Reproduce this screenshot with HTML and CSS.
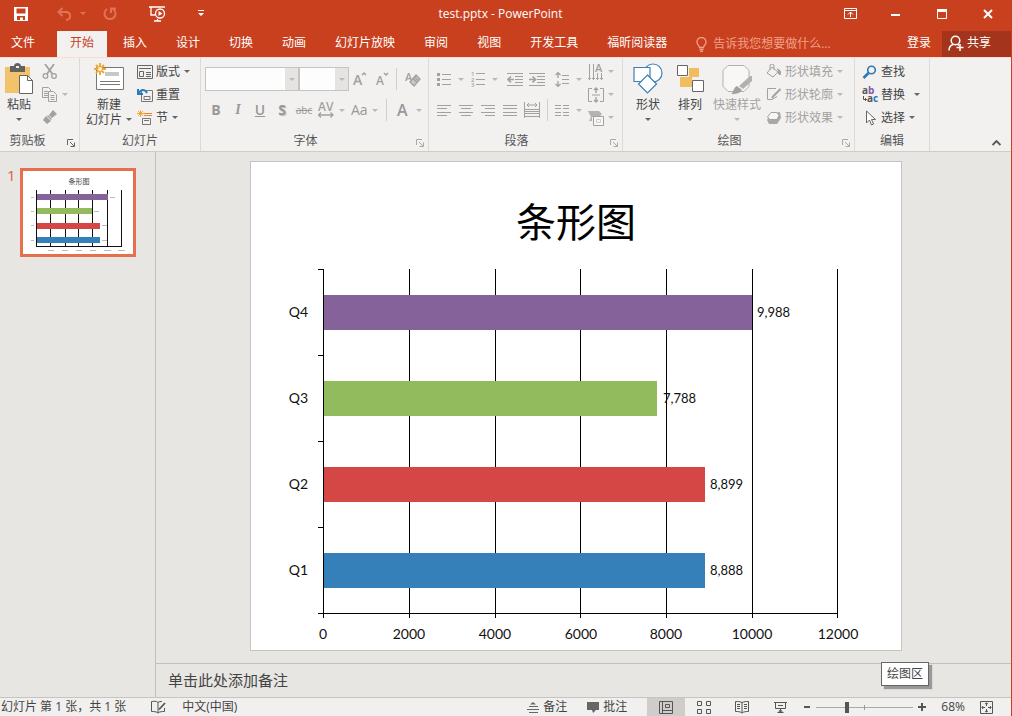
FILE: index.html
```html
<!DOCTYPE html>
<html lang="zh-CN">
<head>
<meta charset="utf-8">
<title>test.pptx - PowerPoint</title>
<link rel="stylesheet" href="styles.css">
</head>
<body>
<div class="app">
  <header class="header">
    <div class="titlebar">
      <div class="quick">
        <button class="quick-btn" aria-label="保存"><svg width="14" height="14" viewBox="0 0 14 14"><path d="M0 0h14v14H0z" fill="#fff"/><path d="M2.500 1.500h9v5h-9zM3 9h8v4H9v-2.500H6V13H3z" fill="#c9401f"/></svg></button>
        <button class="quick-btn wide dim" aria-label="撤消"><svg width="15" height="14" viewBox="0 0 15 14" fill="none" stroke="currentColor" stroke-width="2"><path d="M5.500 1 1.500 5l4 4M2 5h7c5 0 6 7 0 8"/></svg><span class="caret"></span></button>
        <button class="quick-btn dim" aria-label="恢复"><svg width="14" height="14" viewBox="0 0 14 14" fill="none" stroke="currentColor" stroke-width="2"><path d="M4 2a5.500 5.500 0 1 0 6 0M8 6V1.500h5"/></svg></button>
        <button class="quick-btn" aria-label="从头开始放映"><svg width="17" height="16" viewBox="0 0 17 16" fill="none" stroke="#fff" stroke-width="1.300"><path d="M0 1h16M2 1v8h4M5 15h7M8.500 13v2"/><circle cx="11" cy="7.500" r="4.500" fill="#c9401f"/><path d="m9.500 5 4 2.500-4 2.500z" fill="#fff" stroke="none"/></svg></button>
        <button class="quick-btn" aria-label="自定义快速访问工具栏"><svg width="6" height="7" viewBox="0 0 6 7" fill="#fff"><path d="M0 0h6v1H0zM0 3h6L3 6z"/></svg></button>
      </div>
      <h1 class="title">test.pptx - PowerPoint</h1>
      <div class="window-controls">
        <button aria-label="功能区显示选项"><svg width="13" height="11" viewBox="0 0 13 11" fill="none" stroke="#fff"><path d="M.5.5h12v10H.5zM.5 2.500h12M6.500 9V4M4 6.500 6.500 4 9 6.500"/></svg></button>
        <button aria-label="最小化"><svg width="10" height="10" viewBox="0 0 10 10"><path d="M0 5h9v2H0z" fill="#fff"/></svg></button>
        <button aria-label="最大化"><svg width="10" height="10" viewBox="0 0 10 10" fill="none" stroke="#fff"><path d="M.5.5h9v9h-9z"/><path d="M0 1.500h10" stroke-width="3"/></svg></button>
        <button aria-label="关闭"><svg width="10" height="10" viewBox="0 0 10 10" stroke="#fff" stroke-width="2"><path d="m1 1 8 8M9 1 1 9"/></svg></button>
      </div>
    </div>
    <nav class="tabs">
      <button class="tab file">文件</button>
      <button class="tab active">开始</button>
      <button class="tab">插入</button>
      <button class="tab">设计</button>
      <button class="tab">切换</button>
      <button class="tab">动画</button>
      <button class="tab">幻灯片放映</button>
      <button class="tab">审阅</button>
      <button class="tab">视图</button>
      <button class="tab">开发工具</button>
      <button class="tab">福昕阅读器</button>
      <button class="tell-me"><svg width="11" height="15" viewBox="0 0 11 15" fill="none" stroke="currentColor" stroke-width="1.300"><path d="M3.500 10.500c0-2-2.500-2.500-2.500-5.500a4.500 4.500 0 0 1 9 0c0 3-2.500 3.500-2.500 5.500zM3.500 12.500h4M4 14.300h3"/></svg>告诉我您想要做什么...</button>
      <button class="login">登录</button>
      <button class="share"><svg width="16" height="16" viewBox="0 0 16 16" fill="none" stroke="#fff" stroke-width="1.500"><circle cx="7.500" cy="5.500" r="4.300"/><path d="M1 15.500c0-4 2-5.500 4.500-6M12 9v7M8.500 12.500h7M9.500 9.500l1.500 1"/></svg>共享</button>
    </nav>
  </header>

  <section class="ribbon" aria-label="开始">
    <div class="group clipboard">
      <div class="group-body">
        <button class="big paste"><svg width="30" height="32" viewBox="0 0 30 32"><path d="M1 4h25v26H1z" fill="#f3c36c"/><path d="M6 3h4c0-4 7-4 7 0h4v6H6z" fill="#626262"/><path d="M12 3h3v2h-3z" fill="#f1f0ef"/><path d="M15.500 12.500h8l5 5v13h-13z" fill="#fff" stroke="#666"/><path d="M23.500 12.500v5h5" fill="none" stroke="#666"/></svg><span>粘贴</span><span class="caret"></span></button>
        <div class="stack disabled">
          <button class="row" aria-label="剪切"><svg width="16" height="15" viewBox="0 0 16 15" fill="none" stroke="currentColor" stroke-width="1.300"><path d="m3 0 7.500 10M12 0 5 10" stroke-width="1.800"/><circle cx="3.500" cy="12" r="2.300"/><circle cx="12" cy="12" r="2.300"/></svg></button>
          <button class="row" aria-label="复制"><svg width="16" height="15" viewBox="0 0 16 15" fill="#f1f0ef" stroke="currentColor"><path d="M.5.5h6l2 2v8h-8zM2 4.500h4M2 6.500h4M2 8.500h4"/><path d="M6.500 4.500h5l3 3v7h-8zM8.500 8.500h4M8.500 10.500h4M8.500 12.500h4"/></svg><span class="caret"></span></button>
          <button class="row" aria-label="格式刷"><svg width="16" height="15" viewBox="0 0 16 15" fill="currentColor"><path d="m11 0 4 4-5 4-3-3zM6 5l4 4-1 1-4-4zM4 6l5 5-4 3-4-4z"/></svg></button>
        </div>
      </div>
      <div class="caption">剪贴板</div>
      <button class="launcher dark" aria-label="剪贴板设置"><svg width="8" height="8" viewBox="0 0 8 8" fill="none" stroke="currentColor"><path d="M.5 6V.5H6M3 3l4 4M7.500 3.500v4h-4"/></svg></button>
    </div>

    <div class="group slides">
      <div class="group-body">
        <button class="big new-slide"><svg width="30" height="28" viewBox="0 0 30 28"><path d="M2.500 4.500h27v22h-27z" fill="#fff" stroke="#777"/><path d="M11 9h14v4H11z" fill="#c8c8c8"/><path d="M6 18.500h20M6 21.500h20" stroke="#777"/><path d="M6 0v12M0 6h12M2 2l8 8M10 2l-8 8" stroke="#efa93b" stroke-width="2"/><circle cx="6" cy="6" r="2" fill="#fff5d5"/></svg><span>新建</span><span class="with-caret">幻灯片<span class="caret"></span></span></button>
        <div class="stack">
          <button class="row"><svg width="16" height="14" viewBox="0 0 16 14" fill="none" stroke="#666"><path d="M.5.500h15v13H.5zM2 3.500h12M2.500 6.500h4v5h-4zM9 7.500h5M9 9.500h5M9 11.500h5"/></svg><span>版式</span><span class="caret"></span></button>
          <button class="row"><svg width="16" height="14" viewBox="0 0 16 14" fill="none" stroke="#777"><path d="M4.500 2.500h11v11h-11zM7 8.500h6v3H7z"/><path d="M10 5C8 1 4 1 2 5M1 1v5h5" stroke="#2a7dba" stroke-width="2"/></svg><span>重置</span></button>
          <button class="row"><svg width="16" height="16" viewBox="0 0 16 16" fill="none" stroke="#777"><path d="M5.500 8.500h8v6h-8zM7 10.500h5"/><path d="M7 3.500h8M7 5.500h8" stroke="#e28738"/><path d="M3.500 0v7M0 3.500h7M1 1l5 5M6 1 1 6" stroke="#efa93b"/></svg><span>节</span><span class="caret"></span></button>
        </div>
      </div>
      <div class="caption">幻灯片</div>
    </div>

    <div class="group font">
      <div class="group-body two-rows disabled">
        <div class="tools">
          <span class="combo combo-wide"><select aria-label="字体"><option></option></select></span>
          <span class="combo"><select aria-label="字号"><option></option></select></span>
          <button class="tool" aria-label="增大字号"><svg width="16" height="16" viewBox="0 0 16 16" fill="none" stroke="currentColor" stroke-width="1.500"><text class="icon-text" x="1" y="14" font-size="14">A</text><path d="m10 4 2-2 2 2"/></svg></button>
          <button class="tool" aria-label="减小字号"><svg width="16" height="16" viewBox="0 0 16 16" fill="none" stroke="currentColor" stroke-width="1.500"><text class="icon-text" x="2" y="14" font-size="12">A</text><path d="m10 2 2 2 2-2"/></svg></button>
          <span class="divider"></span>
          <button class="tool" aria-label="清除格式"><svg width="16" height="17" viewBox="0 0 16 17" fill="none" stroke="currentColor" stroke-width="1.300"><text class="icon-text" x="0" y="10" font-size="11">A</text><path d="m11 4 4 4-6 7-4-4zM8 7.500l4 4M9.500 6l4 4" fill="#cbc9c7"/></svg></button>
        </div>
        <div class="tools">
          <button class="tool glyph bold">B</button>
          <button class="tool glyph italic">I</button>
          <button class="tool glyph underline">U</button>
          <button class="tool glyph shadow">S</button>
          <button class="tool glyph strike">abc</button>
          <button class="tool-menu" aria-label="字符间距"><svg width="18" height="16" viewBox="0 0 18 16" fill="none" stroke="currentColor" stroke-width="1.300"><text class="icon-text" x="1" y="9" font-size="12">AV</text><path d="M1 13h15M4 10.500 1.500 13 4 15.500M13.500 10.500 16 13l-2.500 2.500"/></svg><span class="caret"></span></button>
          <button class="tool-menu glyph">Aa<span class="caret"></span></button>
          <span class="divider"></span>
          <button class="tool-menu glyph color">A<span class="caret"></span></button>
        </div>
      </div>
      <div class="caption">字体</div>
      <button class="launcher" aria-label="字体设置"><svg width="8" height="8" viewBox="0 0 8 8" fill="none" stroke="currentColor"><path d="M.5 6V.5H6M3 3l4 4M7.500 3.500v4h-4"/></svg></button>
    </div>

    <div class="group paragraph">
      <div class="group-body">
        <div class="two-rows disabled">
          <div class="tools">
            <button class="list-menu" aria-label="项目符号"><svg width="14" height="15" viewBox="0 0 14 15" fill="none" stroke="currentColor"><path d="M5 2.500h9M5 7.500h9M5 12.500h9"/><path d="M0 2.500h3M0 7.500h3M0 12.500h3" stroke-width="3"/></svg><span class="caret"></span></button>
            <button class="list-menu" aria-label="编号"><svg width="14" height="16" viewBox="0 0 14 16" fill="none" stroke="currentColor"><path d="M5 2.500h9M5 8.500h9M5 13.500h9"/><text class="icon-text" font-size="6"><tspan x="0" y="5">1</tspan><tspan x="0" y="11">2</tspan><tspan x="0" y="16">3</tspan></text></svg><span class="caret"></span></button>
            <button class="tool indent" aria-label="减少缩进"><svg width="16" height="13" viewBox="0 0 16 13" fill="none" stroke="currentColor"><path d="M0 .5h16M8 3.500h8M8 6.500h8M8 9.500h8M0 12.500h16"/><path d="M7 6.500H1M4 3.500l-3 3 3 3" stroke-width="1.700"/></svg></button>
            <button class="tool" aria-label="增加缩进"><svg width="16" height="13" viewBox="0 0 16 13" fill="none" stroke="currentColor"><path d="M0 .5h16M8 3.500h8M8 6.500h8M8 9.500h8M0 12.500h16"/><path d="M0 6.500h6M3.500 3.500l3 3-3 3" stroke-width="1.700"/></svg></button>
            <button class="list-menu spacing" aria-label="行距"><svg width="14" height="15" viewBox="0 0 14 15" fill="none" stroke="currentColor"><path d="M7 3.500h7M7 7.500h7M7 11.500h7"/><path d="M3 0v6M.5 3 3 .700 5.500 3M3 9v6M.5 12 3 14.300 5.500 12" stroke-width="1.300"/></svg><span class="caret"></span></button>
          </div>
          <div class="tools">
            <button class="tool" aria-label="左对齐"><svg width="14" height="11" viewBox="0 0 14 11" stroke="currentColor"><path d="M0 .5h14M0 3.500h10M0 7.500h14M0 10.500h10"/></svg></button>
            <button class="tool" aria-label="居中"><svg width="14" height="11" viewBox="0 0 14 11" stroke="currentColor"><path d="M0 .5h14M2 3.500h10M0 7.500h14M2 10.500h10"/></svg></button>
            <button class="tool" aria-label="右对齐"><svg width="14" height="11" viewBox="0 0 14 11" stroke="currentColor"><path d="M0 .5h14M4 3.500h10M0 7.500h14M4 10.500h10"/></svg></button>
            <button class="tool" aria-label="两端对齐"><svg width="14" height="11" viewBox="0 0 14 11" stroke="currentColor"><path d="M0 .5h14M0 3.500h14M0 7.500h14M0 10.500h14"/></svg></button>
            <button class="tool" aria-label="分散对齐"><svg width="16" height="16" viewBox="0 0 16 16" fill="none" stroke="currentColor"><path d="M.5 0v16M15.500 0v16M3 3h10M5 1 3 3l2 2M11 1l2 2-2 2M1 7.500h14M1 9.500h14M1 11.500h14M1 14.500h14"/></svg></button>
            <span class="divider near"></span>
            <button class="list-menu" aria-label="分栏"><svg width="14" height="11" viewBox="0 0 14 11" stroke="currentColor"><path d="M0 .5h6M0 3.500h6M0 7.500h6M0 10.500h6M8 .5h6M8 3.500h6M8 7.500h6M8 10.500h6"/></svg><span class="caret"></span></button>
          </div>
        </div>
        <div class="stack disabled">
          <button class="row" aria-label="文字方向"><svg width="16" height="16" viewBox="0 0 16 16" fill="none" stroke="currentColor"><path d="M1.500 0v16M5.500 0v16M9.500 9v7M13.500 9v7M0 14l1.500 1.500L3 14M4 14l1.500 1.500L7 14M8 14l1.500 1.500L11 14M12 14l1.500 1.500L15 14"/><text class="icon-text" x="7" y="8" font-size="11">A</text></svg><span class="caret"></span></button>
          <button class="row" aria-label="对齐文本"><svg width="16" height="16" viewBox="0 0 16 16" fill="none" stroke="currentColor"><path d="M4 1.500H.5v13H4M12 1.500h3.500v13H12M4 8h8"/><path d="M8 6V1M6 3l2-2 2 2M8 10v5M6 13l2 2 2-2" stroke-width="1.400"/></svg><span class="caret"></span></button>
          <button class="row" aria-label="转换为 SmartArt"><svg width="16" height="16" viewBox="0 0 16 16"><path d="M0 1h11l3 3-3 3H4v4H1l2-4z" fill="#b5b3b1"/><path d="M5.500 6.500h10v9h-10z" fill="#f8f7f6" stroke="currentColor"/><path d="M8.500 9.500h4v3h-4z" fill="none" stroke="#ccc"/></svg><span class="caret"></span></button>
        </div>
      </div>
      <div class="caption">段落</div>
      <button class="launcher" aria-label="段落设置"><svg width="8" height="8" viewBox="0 0 8 8" fill="none" stroke="currentColor"><path d="M.5 6V.5H6M3 3l4 4M7.500 3.500v4h-4"/></svg></button>
    </div>

    <div class="group drawing">
      <div class="group-body">
        <button class="big"><svg width="30" height="32" viewBox="0 0 30 32" fill="#fff" stroke="#3c7fb5" stroke-width="1.200"><circle cx="20" cy="10" r="9"/><path d="M1 4.500h16v14H1z"/><path d="m14.500 12 9 9-9 9-9-9z"/></svg><span>形状</span><span class="caret"></span></button>
        <button class="big"><svg width="28" height="32" viewBox="0 0 28 32"><path d="M13 5h10v9H13zM4 14h12v10H4z" fill="#f1bd5e"/><path d="M1.500 2.500h10v10h-10zM16.500 17.500h11v11h-11z" fill="#fff" stroke="#666"/></svg><span>排列</span><span class="caret"></span></button>
        <button class="big quick-style disabled"><svg width="32" height="32" viewBox="0 0 32 32"><path d="M7 2.500h16l5 5v16l-5 5H7l-5-5v-16z" fill="#f8f7f6" stroke="#b3b1af" stroke-linejoin="round"/><path d="M31 13v5l-9 8-4-3 11-10z" fill="#b3b1af"/><path d="m16 23 5 4c-2 4-7 4-11 4 3-2 2-6 6-8z" fill="#a4a2a0"/></svg><span>快速样式</span><span class="caret"></span></button>
        <div class="stack disabled">
          <button class="row"><svg width="16" height="15" viewBox="0 0 16 15" fill="none" stroke="currentColor"><path d="m6 3 6 5-5 5-6-4zM4 6V2a2 2 0 0 1 4 0v4"/><path d="M11 5c4 1 4 3 3 6-2-1-2-3-1-4z" fill="currentColor"/></svg><span>形状填充</span><span class="caret"></span></button>
          <button class="row"><svg width="16" height="15" viewBox="0 0 16 15" fill="none" stroke="currentColor"><path d="M10 1.500H1.500v11H6l5-3"/><path d="M14.500 2 8 8.500 6 11" stroke-width="2"/></svg><span>形状轮廓</span><span class="caret"></span></button>
          <button class="row"><svg width="16" height="15" viewBox="0 0 16 15"><path d="m4 4 10-2 1 6-4 6H3l-2-4z" fill="#aaa8a6"/><path d="M5 2.500h6l2 3-2 4H4L1.500 7z" fill="#f8f7f6" stroke="currentColor"/></svg><span>形状效果</span><span class="caret"></span></button>
        </div>
      </div>
      <div class="caption">绘图</div>
      <button class="launcher" aria-label="绘图设置"><svg width="8" height="8" viewBox="0 0 8 8" fill="none" stroke="currentColor"><path d="M.5 6V.5H6M3 3l4 4M7.500 3.500v4h-4"/></svg></button>
    </div>

    <div class="group editing">
      <div class="group-body">
        <div class="stack">
          <button class="row"><svg width="14" height="14" viewBox="0 0 14 14" fill="none" stroke="#2e78b5"><circle cx="8.500" cy="5" r="3.800" stroke-width="1.600"/><path d="m5.500 8-5 5" stroke-width="2.600"/></svg><span>查找</span></button>
          <button class="row"><svg width="16" height="18" viewBox="0 0 16 18" fill="none"><text class="icon-bold" x="0" y="8" fill="#555">a<tspan fill="#8b57a8">b</tspan></text><text class="icon-bold" x="5" y="16" fill="#555">a<tspan fill="#2e78b5">c</tspan></text><path d="M1.500 10v3.500h3M3 12l1.500 1.500L3 15" stroke="#555"/></svg><span>替换</span><span class="caret replace-caret"></span></button>
          <button class="row"><svg width="14" height="16" viewBox="0 0 14 16" fill="#fff" stroke="#666"><path d="M3.500 1v12l3-3 2 5 2-1-2-4.500h4z"/></svg><span>选择</span><span class="caret"></span></button>
        </div>
      </div>
      <div class="caption">编辑</div>
    </div>
    <button class="collapse" aria-label="折叠功能区"><svg width="9" height="6" viewBox="0 0 9 6" fill="none" stroke="#555" stroke-width="1.800"><path d="m.5 5 4-4 4 4"/></svg></button>
  </section>

  <main class="workspace">
    <aside class="thumbs">
      <span class="thumb-number">1</span>
      <button class="thumb" aria-label="幻灯片 1">
        <svg viewBox="0 0 110 83">
          <text class="thumb-title" x="56" y="13">条形图</text>
          <path d="M13.500 19v57M27.500 19v57M42.500 19v57M55.500 19v57M69.500 19v57M84.500 19v57M98.500 19v57M13 75.500h86" stroke="#111" fill="none"/>
          <path d="M14 23h71v6H14z" fill="#86629a"/><path d="M14 37h55v6H14z" fill="#92bb5d"/><path d="M14 52h63v6H14z" fill="#d54744"/><path d="M14 66h63v6H14z" fill="#3580b8"/>
          <path d="M8 26.500h3M8 40.500h3M8 54.500h3M8 69.500h3M87 26.500h5M71 40.500h5M79 54.500h5M79 69.500h5M25 79.500h6M39 79.500h6M53 79.500h6M67 79.500h6M81 79.500h7M95 79.500h7" stroke="#bbb"/>
        </svg>
      </button>
    </aside>
    <div class="editor">
      <div class="canvas">
        <div class="slide">
          <svg class="chart" viewBox="0 0 650 488" role="img" aria-label="条形图">
            <text class="chart-title" x="325" y="75">条形图</text>
            <path class="axis" d="M158.500 107v349M244.500 107v349M329.500 107v349M415.500 107v349M501.500 107v349M586.500 107v349"/>
            <rect x="73" y="133" width="428" height="35" fill="#86629a"/>
            <rect x="73" y="219" width="333" height="35" fill="#92bb5d"/>
            <rect x="73" y="305" width="381" height="35" fill="#d54744"/>
            <rect x="73" y="391" width="381" height="35" fill="#3580b8"/>
            <path class="axis" d="M72.500 107v349M67 107.500h6M67 193.500h6M67 279.500h6M67 365.500h6M67 451.500h520"/>
            <g class="category"><text x="57" y="155">Q4</text><text x="57" y="241">Q3</text><text x="57" y="327">Q2</text><text x="57" y="413">Q1</text></g>
            <g class="value"><text x="506" y="155">9,988</text><text x="412" y="241">7,788</text><text x="459" y="327">8,899</text><text x="459" y="413">8,888</text></g>
            <g class="scale"><text x="72" y="477">0</text><text x="158" y="477">2000</text><text x="244" y="477">4000</text><text x="330" y="477">6000</text><text x="415" y="477">8000</text><text x="501" y="477">10000</text><text x="587" y="477">12000</text></g>
          </svg>
        </div>
      </div>
      <div class="notes">单击此处添加备注<div class="tooltip" role="tooltip">绘图区</div></div>
    </div>
  </main>

  <footer class="status">
    <span class="slide-count">幻灯片 第 1 张，共 1 张</span>
    <button class="proof" aria-label="拼写检查"><svg width="15" height="14" viewBox="0 0 15 14" fill="none" stroke="#555"><path d="M7 2.500C5 .500 3 1.500.5 1.500v10c2.500 0 4.500 0 6.500 1.500V2.500c1-1 3-1 4-1M7 13c2-1.500 4-1.500 6.500-1.500V8"/><path d="m14 3-6 6.500" stroke-width="1.800"/></svg></button>
    <button>中文(中国)</button>
    <div class="status-right">
      <button class="note-btn"><svg width="12" height="12" viewBox="0 0 12 12" fill="none" stroke="#666"><path d="M3 3.500 6 1l3 2.500z" fill="#666" stroke="none"/><path d="M2 5.500h9M0 8.500h12M2 11.500h9"/></svg>备注</button>
      <button class="note-btn comment"><svg width="12" height="12" viewBox="0 0 12 12" fill="#666"><path d="M0 1h12v8H9l-3 3-1-3H0z"/></svg>批注</button>
      <button class="view current" aria-label="普通视图"><svg width="14" height="13" viewBox="0 0 14 13" fill="none" stroke="#555"><path d="M.5.5h13v12H.5zM3.500 0v13M6.500 3.500h4v3h-4zM3.500 9.500h10"/></svg></button>
      <button class="view" aria-label="幻灯片浏览"><svg width="14" height="13" viewBox="0 0 14 13" fill="none" stroke="#555"><path d="M.5.5h4v4h-4zM9.500.5h4v4h-4zM.5 8.500h4v4h-4zM9.500 8.500h4v4h-4z"/></svg></button>
      <button class="view" aria-label="阅读视图"><svg width="14" height="13" viewBox="0 0 14 13" fill="none" stroke="#555"><path d="M7 1.500C5 .500 3 .500.500.500v10c2.500 0 4.500 0 6.500 1.500 2-1.500 4-1.500 6.500-1.500V.500c-2.500 0-4.500 0-6.500 1zV12M2 3.500h3M2 5.500h3M2 7.500h3M9 3.500h3M9 5.500h3M9 7.500h3"/></svg></button>
      <button class="view last" aria-label="幻灯片放映"><svg width="13" height="13" viewBox="0 0 13 13" fill="none" stroke="#555"><path d="M0 1.500h13M1.500 2v5.500h10V2M4 4.500h5M6.500 8v3M3.500 11.500h6M6.500 8.500l-2 3M6.500 8.500l2 3"/></svg></button>
      <button class="zoom-btn" aria-label="缩小"><svg width="8" height="8" viewBox="0 0 8 8"><path d="M1 3h6v2H1z" fill="#555"/></svg></button>
      <input class="zoom-slider" type="range" min="0" max="100" value="31" aria-label="显示比例">
      <button class="zoom-btn" aria-label="放大"><svg width="8" height="8" viewBox="0 0 8 8"><path d="M0 3h8v2H0zM3 0h2v8H3z" fill="#555"/></svg></button>
      <button class="zoom-value">68%</button>
      <button class="fit" aria-label="适应窗口"><svg width="13" height="13" viewBox="0 0 13 13" fill="none" stroke="#555"><path d="M.5.5h12v12H.5zM6.500 2v3M6.500 8v3M2 6.500h3M8 6.500h3M5 3l1.500-1L8 3M5 10l1.500 1L8 10M3 5 2 6.500 3 8M10 5l1 1.500L10 8"/></svg></button>
    </div>
  </footer>
</div>
</body>
</html>
```

FILE: styles.css
```css
* { box-sizing: border-box; }

body {
  margin: 0;
  font: 12px/16px "Open Sans", "Noto Sans CJK SC", sans-serif;
  color: #444;
}

button {
  display: flex;
  align-items: center;
  padding: 0;
  border: 0;
  background: none;
  font: inherit;
  color: inherit;
  white-space: nowrap;
}

svg { display: block; flex: none; }
.icon-text { fill: currentColor; stroke: none; font-weight: 600; }
.icon-bold { font-size: 10px; font-weight: 700; }

.app {
  display: flex;
  flex-direction: column;
  min-height: 100vh;
  border-right: 1px solid #c9401f;
  background: #e8e6e3;
}

.caret {
  flex: none;
  width: 6px;
  border: 3px solid transparent;
  border-top-color: #666;
  border-bottom: 0;
}

/* Title bar and tabs */
.header { background: #c9401f; color: #fff; }

.titlebar {
  display: grid;
  grid-template-columns: 1fr auto 1fr;
  align-items: center;
  height: 31px;
  padding-bottom: 4px;
}

.quick { display: flex; align-items: center; padding-left: 14px; gap: 32px; }
.quick-btn { color: #fff; }
.quick-btn.wide { gap: 8px; margin-right: -12px; }
.quick-btn.dim { color: #e07355; margin-left: -3px; }
.quick-btn .caret { border-top-color: currentColor; }
.title { margin: 0; padding-right: 10px; font-size: 12px; line-height: 16px; font-weight: 400; }
.window-controls { display: flex; justify-content: flex-end; }
.window-controls button { justify-content: center; width: 46px; height: 26px; }

.tabs { display: flex; height: 26px; gap: 3px; }
.tab { padding: 0 13px 2px; }
.tab.file { padding: 0 19px 2px 11px; }
.tab.active { background: #f2f1f0; color: #c9401f; }
.tell-me { margin-left: 13px; gap: 6px; color: #f0a08a; }
.login { margin-left: auto; padding: 0 8px 2px; }
.share { width: 69px; padding: 0 0 2px 6px; gap: 3px; background: #a4341b; }

/* Ribbon */
.ribbon {
  display: flex;
  height: 95px;
  border-top: 1px solid #fbdcd5;
  border-bottom: 1px solid #cfccca;
  background: #f2f1f0;
}

.group {
  position: relative;
  flex: none;
  display: flex;
  flex-direction: column;
  padding: 2px 0;
  border-right: 1px solid #dcdad8;
}

.group-body { display: flex; height: 73px; }
.caption { text-align: center; color: #555; }
.disabled { color: #a3a19f; }
.disabled .caret { border-top-color: #bbb9b7; }

.clipboard { width: 80px; }
.clipboard .caption { padding-right: 24px; }
.slides { width: 121px; }
.font { width: 228px; padding-left: 4px; }
.font .caption, .drawing .caption, .paragraph .caption { padding-right: 22px; }
.paragraph { width: 194px; padding-left: 4px; }
.drawing { width: 232px; padding-left: 4px; }
.editing { width: 75px; padding-left: 7px; }
.editing .caption { padding-right: 7px; }

.launcher { position: absolute; right: 4px; bottom: 4px; color: #aaa; }
.launcher.dark { color: #666; }

.big {
  flex-direction: column;
  width: 42px;
  padding-top: 3px;
}
.big svg { margin-bottom: 2px; }
.big .caret { margin-top: 5px; }
.paste { width: 38px; margin-right: 4px; }
.new-slide { width: 50px; margin-left: 4px; }
.new-slide svg { margin-bottom: 6px; }
.new-slide span { line-height: 15px; }
.with-caret { display: flex; align-items: center; gap: 4px; }
.big .with-caret .caret { margin-top: 0; }
.quick-style { width: 52px; margin-right: 3px; }

.stack { display: flex; flex-direction: column; }
.row { height: 23px; gap: 3px; }
.row .caret { margin-left: 1px; }
.slides .stack { padding-left: 3px; }
.paragraph .stack { padding-left: 3px; }
.row .replace-caret { margin-left: 6px; }
.editing .row svg { width: 16px; }

.two-rows { display: flex; flex-direction: column; gap: 7px; padding-top: 7px; }
.tools { display: flex; align-items: center; height: 24px; }
.tool { justify-content: center; width: 22px; height: 24px; }
.tool-menu { gap: 4px; padding-left: 2px; width: 34px; height: 24px; }
.list-menu { gap: 7px; padding-left: 4px; width: 34px; height: 24px; }
.indent { margin-left: 3px; }
.spacing { margin-left: 3px; }
.divider { width: 1px; height: 22px; margin: 0 5px 0 3px; background: #d2d0ce; }
.divider.near { margin: 0 3px 0 4px; }

.combo { position: relative; width: 50px; height: 24px; }
.combo-wide { width: 94px; }
.combo select {
  appearance: none;
  width: 100%;
  height: 24px;
  border: 1px solid #c6c4c2;
  border-radius: 0;
  background: linear-gradient(to left, #e6e4e2 13px, #fdfdfd 13px);
}
.combo::after {
  content: "";
  position: absolute;
  right: 4px;
  top: 11px;
  border: 3px solid transparent;
  border-top-color: #bbb9b7;
  border-bottom: 0;
}

.glyph { font-size: 14px; color: #999; }
.bold { font-weight: 700; }
.italic { font-family: "Liberation Serif", serif; font-style: italic; font-weight: 700; }
.underline { font-weight: 600; text-decoration: underline; }
.shadow { font-weight: 700; text-shadow: 1px 1px 1px #bbb; }
.strike { font-size: 10px; text-decoration: line-through; }
.color { padding-left: 5px; gap: 8px; font-size: 16px; font-weight: 600; }

.collapse { align-self: flex-end; margin: 0 10px 5px auto; }

/* Workspace */
.workspace { flex: 1; display: flex; min-height: 0; }

.thumbs {
  flex: none;
  display: flex;
  align-items: flex-start;
  gap: 5px;
  width: 156px;
  padding: 16px 0 0 7px;
  border-right: 1px solid #c2bfbc;
}
.thumb-number { font-size: 15px; line-height: 14px; color: #d65f41; width: 8px; }
.thumb { width: 116px; border: 3px solid #e4704f; background: #fff; }
.thumb svg { width: 100%; }
.thumb-title { font-size: 7px; text-anchor: middle; fill: #444; }

.editor { flex: 1; min-width: 0; display: flex; flex-direction: column; }
.canvas {
  flex: 1;
  display: flex;
  justify-content: center;
  padding: 9px 15px 12px 0;
}
.slide {
  aspect-ratio: 652 / 490;
  border: 1px solid #c6c4c1;
  background: #fff;
}
.chart { width: 100%; height: 100%; font-family: Lato, "Noto Sans CJK SC", sans-serif; fill: #111; }
.chart-title { font-size: 40px; text-anchor: middle; fill: #000; }
.axis { fill: none; stroke: #000; }
.category { font-size: 14px; text-anchor: end; }
.value { font-size: 13px; }
.scale { font-size: 14px; text-anchor: middle; }

.notes {
  position: relative;
  padding: 7px 12px;
  border-top: 1px solid #c2bfbc;
  font-size: 15px;
  line-height: 19px;
}
.tooltip {
  position: absolute;
  right: 82px;
  top: -2px;
  padding: 2px 5px;
  border: 1px solid #666;
  background: #fff;
  box-shadow: 3px 3px 1px #999;
  font-size: 12px;
  line-height: 18px;
}

/* Status bar */
.status {
  display: flex;
  align-items: center;
  height: 19px;
  padding-left: 1px;
  border-top: 1px solid #c6c4c2;
  background: #f1f0ee;
}
.proof { margin: 0 16px 0 25px; }
.status-right { display: flex; align-items: center; margin-left: auto; }
.note-btn { gap: 4px; margin-right: 20px; }
.view { justify-content: center; width: 38px; height: 18px; }
.view.current { background: #cfccca; }
.view.last { margin-right: 4px; }
.zoom-btn { width: 8px; justify-content: center; }
.zoom-slider {
  appearance: none;
  width: 97px;
  height: 13px;
  margin: 0 5px;
  background:
    linear-gradient(#999, #999) center / 1px 5px no-repeat,
    linear-gradient(#aaa, #aaa) center / 100% 1px no-repeat;
}
.zoom-slider::-webkit-slider-thumb { appearance: none; width: 4px; height: 11px; background: #555; }
.zoom-value { margin: 0 15px; }
.fit { margin-right: 18px; }
```
